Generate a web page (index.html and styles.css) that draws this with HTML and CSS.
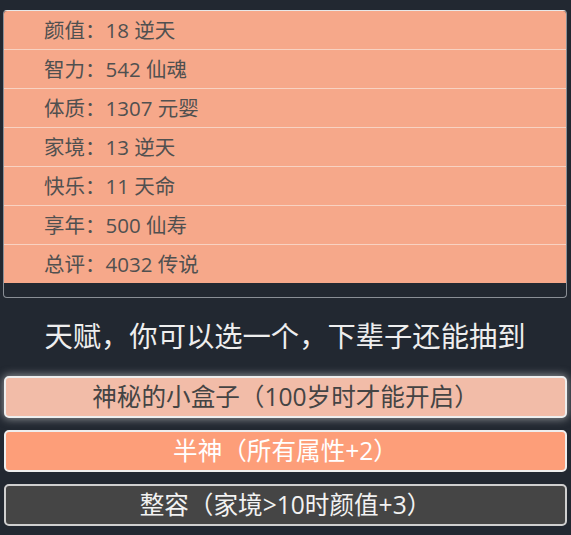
FILE: index.html
```html
<!DOCTYPE html>
<html lang="zh">
<head>
<meta charset="utf-8">
<link rel="stylesheet" href="styles.css">
</head>
<body>
<div class="page">
  <ul class="props">
    <li>颜值：18 逆天</li>
    <li>智力：542 仙魂</li>
    <li>体质：1307 元婴</li>
    <li>家境：13 逆天</li>
    <li>快乐：11 天命</li>
    <li>享年：500 仙寿</li>
    <li>总评：4032 传说</li>
  </ul>
  <div class="title">天赋，你可以选一个，下辈子还能抽到</div>
  <ul class="talents">
    <li class="talent grade1 glow">神秘的小盒子（100岁时才能开启）</li>
    <li class="talent grade2">半神（所有属性+2）</li>
    <li class="talent grade0">整容（家境&gt;10时颜值+3）</li>
  </ul>
</div>
</body>
</html>
```
FILE: styles.css
```css
html, body {
  margin: 0;
  padding: 0;
  background: #222831;
}
body {
  font-family: "Open Sans", "Noto Sans CJK SC", "Microsoft YaHei", sans-serif;
  width: 571px;
  height: 535px;
  overflow: hidden;
}
.page {
  padding: 10px 4px 0 3px;
}
.props {
  list-style: none;
  margin: 0;
  padding: 0 0 14px 0;
  border: 1px solid #8a8f96;
  border-top-color: #e8e8e8;
  border-radius: 4px;
  overflow: hidden;
}
.props li {
  height: 38px;
  line-height: 38px;
  background: #f6a88a;
  color: #505050;
  font-size: 20.5px;
  padding-left: 40px;
  border-bottom: 1px solid #f8d2c2;
}
.props li:last-child {
  border-bottom: none;
}
.title {
  text-align: center;
  color: #eeeeee;
  font-size: 28.3px;
  line-height: 40px;
  margin-top: 18px;
  margin-bottom: 20px;
}
.talents {
  list-style: none;
  margin: 0;
  padding: 0 0 0 1px;
  display: flex;
  flex-direction: column;
  gap: 12px;
}
.talent {
  height: 38px;
  line-height: 38px;
  text-align: center;
  font-size: 24.6px;
  border: 2px solid #eeeeee;
  border-radius: 5px;
}
.grade1 {
  background: #f2bca8;
  color: #444;
}
.glow {
  box-shadow: 0 0 8px 1px rgba(230, 230, 230, 0.55);
}
.grade2 {
  background: #fd9e79;
  color: #ffffff;
}
.grade0 {
  background: #454545;
  color: #f2f2f2;
  border-color: #cfcfcf;
}
```
